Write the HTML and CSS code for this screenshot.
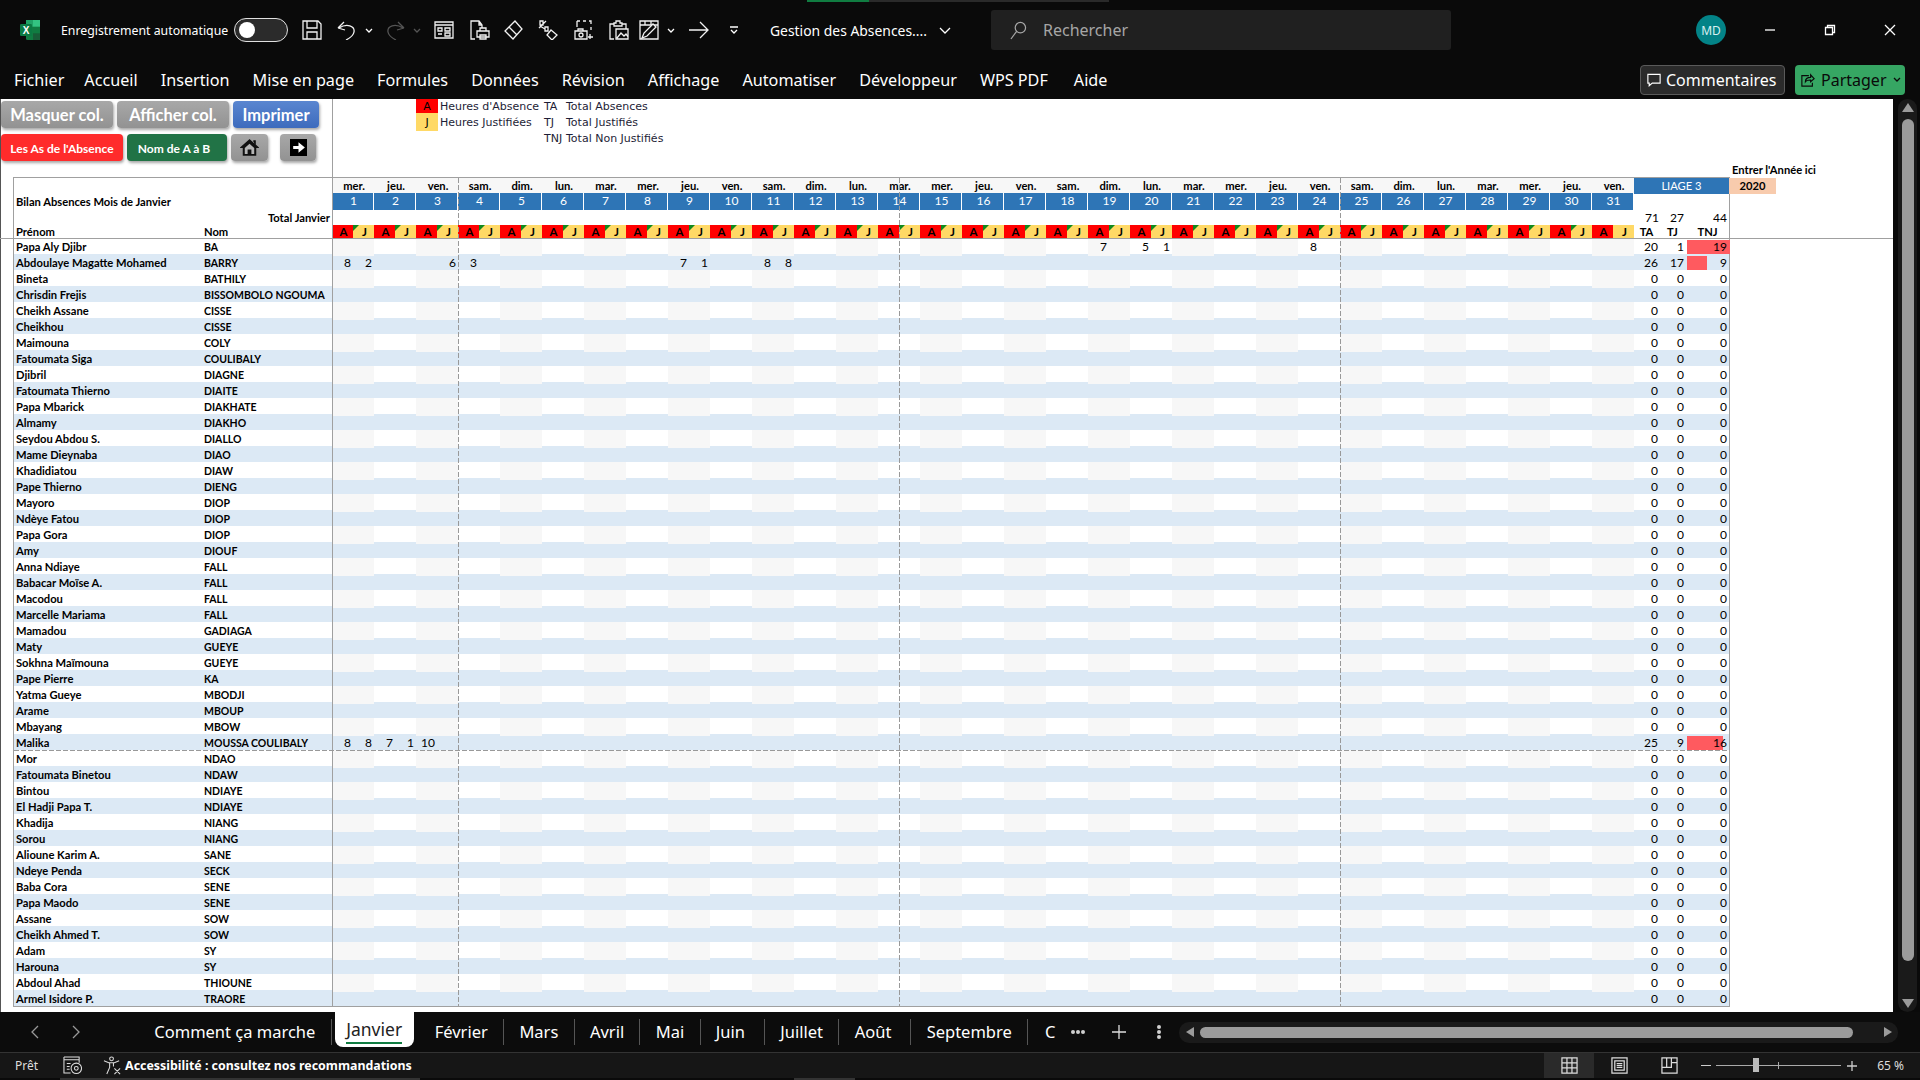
FILE: index.html
```html
<!DOCTYPE html>
<html lang="fr">

<head>
  <meta charset="UTF-8">
  <title>Gestion des Absences</title>
  <link rel="stylesheet" href="styles.css">
</head>

<body>
  <div class="edge-top"><span class="edge-green"></span><span class="edge-grey"></span></div>

  <header class="titlebar">
    <svg class="ico logo" viewBox="0 0 20 20">
      <rect x="6" y="0" width="14" height="20" rx="1.5" fill="#107c41"/>
      <rect x="13" y="0" width="7" height="6.7" fill="#33c481"/>
      <rect x="6" y="0" width="7" height="6.7" fill="#21a366"/>
      <rect x="13" y="13.3" width="7" height="6.7" fill="#185c37"/>
      <rect x="0" y="4" width="12" height="12" rx="1.2" fill="#0b7a43"/>
      <text x="6" y="13.5" text-anchor="middle" class="logo-x">X</text>
    </svg>
    <span class="autosave">Enregistrement automatique</span>
    <span class="toggle"><span class="toggle-dot"></span></span>

    <svg class="ico ico-save" viewBox="0 0 20 20"><path d="M1 1h15l3 3v15H1zM5 1v7h10V1M5 19v-7h10v7"/></svg>
    <svg class="ico ico-undo" viewBox="0 0 20 20"><path d="M1 8l6-6M1 8l7 2M2 8c8-5 16-2 15 4-.5 3-4 6-8 8"/></svg>
    <svg class="chev chev-undo" viewBox="0 0 8 5"><path d="M1 1l3 3 3-3"/></svg>
    <svg class="ico ico-redo" viewBox="0 0 20 20"><path d="M19 8l-6-6M19 8l-7 2M18 8c-8-5-16-2-15 4 .5 3 4 6 8 8"/></svg>
    <svg class="chev chev-redo" viewBox="0 0 8 5"><path d="M1 1l3 3 3-3"/></svg>
    <svg class="ico ico-form" viewBox="0 0 20 20"><path d="M1 2h18v16H1zM1 5h18M4 8h4v3H4zM11 8h5v3h-5zM4 14h4M11 13h5v3h-5z"/></svg>
    <svg class="ico ico-print" viewBox="0 0 20 20"><path d="M5 19H1V1h8l3 4v3M9 1v4h3M7 11h12v6H7zM10 11V8h6v3M10 15h6v4h-6z"/></svg>
    <svg class="ico ico-erase" viewBox="0 0 20 20"><path d="M12 1l7 8-9 10-8-8zM6 7l8 8"/></svg>
    <svg class="ico ico-pct" viewBox="0 0 20 20"><path d="M2 1h3v4H2zM7 9l-5-3M1 8l7-7M7 7h3v4H7zM13 10l6 5-5 5-5-5z"/></svg>
    <svg class="ico ico-cam" viewBox="0 0 20 20"><path d="M3 1h3M9 1h3M15 1h2v3M17 7v3M3 1v6M1 11h12v8H1zM4 11V9h5v2M16 14v5M14 17h5"/><circle cx="7" cy="15" r="2"/></svg>
    <svg class="ico ico-paste" viewBox="0 0 20 20"><path d="M5 19H1V4h4M13 4h4v5M5 5V3h2V1h4v2h2v3H5zM7 9h12v10H7zM8 18l4-5 3 3 2-2 2 3"/></svg>
    <svg class="ico ico-fmt" viewBox="0 0 20 20"><path d="M1 1h18v18H1zM1 5h18M6 1v4M12 1v4"/><path class="fill" d="M3 18l2-5 9-9 3 3-9 9z"/></svg>
    <svg class="chev chev-fmt" viewBox="0 0 8 5"><path d="M1 1l3 3 3-3"/></svg>
    <svg class="ico ico-arrow" viewBox="0 0 20 20"><path d="M0 10h19M11 2l8 8-8 8"/></svg>
    <svg class="chev qat" viewBox="0 0 10 9"><path d="M1 1h8M2 4l3 3 3-3"/></svg>

    <span class="doc-title">Gestion des Absences....</span>
    <svg class="chev chev-title" viewBox="0 0 12 7"><path d="M1 1l5 5 5-5"/></svg>

    <div class="search">
      <svg class="glass" viewBox="0 0 18 20"><circle cx="11" cy="7" r="5.5"/><path d="M7 11L1 19"/></svg>
      <span>Rechercher</span>
    </div>

    <span class="avatar">MD</span>
    <svg class="win win-min" viewBox="0 0 12 12"><path d="M1 6h10"/></svg>
    <svg class="win win-max" viewBox="0 0 12 12"><path d="M1.5 3.5h7v7h-7zM3.5 3.5v-2h7v7h-2"/></svg>
    <svg class="win win-close" viewBox="0 0 12 12"><path d="M1 1l10 10M11 1L1 11"/></svg>
  </header>

  <nav class="ribbon">
    <span class="rib-file">Fichier</span>
    <span>Accueil</span>
    <span>Insertion</span>
    <span>Mise en page</span>
    <span>Formules</span>
    <span>Données</span>
    <span>Révision</span>
    <span>Affichage</span>
    <span>Automatiser</span>
    <span>Développeur</span>
    <span class="rib-wps">WPS PDF</span>
    <span>Aide</span>
    <button class="btn-comments">
      <svg viewBox="0 0 16 16"><path d="M1 1.5h14v10H6l-3.500 3v-3H1z"/></svg>
      Commentaires
    </button>
    <button class="btn-share">
      <svg viewBox="0 0 16 16"><path d="M9 3H1v12h12v-4M5 10c0-4 3-5 6-5V2l4 4.500L11 10V8C8 8 6 8.500 5 10z"/></svg>
      Partager
      <svg class="share-chev" viewBox="0 0 8 5"><path d="M1 1l3 3 3-3"/></svg>
    </button>
  </nav>

  <main class="workspace">
    <section class="sheet">
      <div class="sheet-top">
        <div class="macros">
          <div class="macro-row">
            <button class="macro grey wide">Masquer col.</button>
            <button class="macro grey wide">Afficher col.</button>
            <button class="macro blue print">Imprimer</button>
          </div>
          <div class="macro-row">
            <button class="macro red small">Les As de l'Absence</button>
            <button class="macro green small name-sort">Nom de A à B</button>
            <button class="macro grey home">
              <svg viewBox="0 0 20 18"><path d="M10 1L1 9h2.500v8h13V9H19zM14 2h2v4"/><path class="home-door" d="M5 9.500L10 5l5 4.500V16h-3v-5H8v5H5z"/></svg>
            </button>
            <button class="macro grey next">
              <svg viewBox="0 0 16 16"><rect width="16" height="16"/><path class="next-arrow" d="M3 6.500h5V3l6 5-6 5V9.500H3z"/></svg>
            </button>
          </div>
        </div>

        <div class="legend">
          <span class="key key-a">A</span><span>Heures d'Absence</span><span>TA</span><span>Total Absences</span>
          <span class="key key-j">J</span><span>Heures Justifiées</span><span>TJ</span><span>Total Justifiés</span>
          <span></span><span></span><span>TNJ</span><span>Total Non Justifiés</span>
        </div>

        <div class="year-note">Entrer l'Année ici</div>
      </div>

      <div class="table" id="table">
        <div class="head" id="head"></div>
        <div id="rows"></div>
        <span class="vline vline-first"></span>
        <span class="page-break pb-1"></span>
        <span class="page-break pb-2"></span>
        <span class="page-break pb-3"></span>
        <span class="page-break-h"></span>
      </div>
      <span class="head-rule"></span>
    </section>

    <aside class="vscroll">
      <span class="arrow-up"></span>
      <span class="vthumb"></span>
      <span class="arrow-down"></span>
    </aside>
  </main>

  <footer class="tabbar">
    <svg class="tab-nav nav-prev" viewBox="0 0 8 14"><path d="M7 1L1 7l6 6"/></svg>
    <svg class="tab-nav nav-next" viewBox="0 0 8 14"><path d="M1 1l6 6-6 6"/></svg>
    <div class="tabs">
      <span class="tab">Comment ça marche</span>
      <span class="tab active">Janvier</span>
      <span class="tab">Février</span>
      <span class="tab">Mars</span>
      <span class="tab">Avril</span>
      <span class="tab">Mai</span>
      <span class="tab roomy">Juin</span>
      <span class="tab">Juillet</span>
      <span class="tab roomy">Août</span>
      <span class="tab">Septembre</span>
      <span class="tab last">C</span>
    </div>
    <span class="tab-more"><i></i><i></i><i></i></span>
    <svg class="tab-add" viewBox="0 0 14 14"><path d="M7 0v14M0 7h14"/></svg>
    <span class="tab-dots"><i></i><i></i><i></i></span>
    <div class="hscroll">
      <span class="arrow-left"></span>
      <span class="hthumb"></span>
      <span class="arrow-right"></span>
    </div>
  </footer>

  <div class="statusbar">
    <span class="ready">Prêt</span>
    <svg class="status-ico macro-ico" viewBox="0 0 20 20"><path d="M1 1h16v6M1 4h16M1 1v17h7M4 8h4M4 11h3M4 14h3"/><circle cx="14" cy="13" r="5.500"/><circle cx="14" cy="13" r="2"/></svg>
    <svg class="status-ico access-ico" viewBox="0 0 20 20"><circle cx="9" cy="3" r="2"/><path d="M1 5l5 2h6l5-2M7 7v5l-3 7M11 7v4M12 13l6 6M18 13l-6 6"/></svg>
    <span class="access-text">Accessibilité : consultez nos recommandations</span>
    <div class="status-right">
      <span class="view active">
        <svg viewBox="0 0 18 18"><path d="M1 1h16v16H1zM1 6.300h16M1 11.600h16M6.300 1v16M11.600 1v16"/></svg>
      </span>
      <span class="view">
        <svg viewBox="0 0 18 18"><path d="M1 1h16v16H1zM4 4h10v10H4zM6 7h6M6 9h6M6 11h6"/></svg>
      </span>
      <span class="view">
        <svg viewBox="0 0 18 18"><path d="M1 1h16v16H1zM1 11h10V1M6 1v10M11 6h6"/></svg>
      </span>
      <span class="zoom-minus"></span>
      <span class="slider"><span class="slider-tick"></span><span class="slider-thumb"></span></span>
      <svg class="zoom-plus" viewBox="0 0 10 10"><path d="M5 0v10M0 5h10"/></svg>
      <span class="zoom-val">65 %</span>
    </div>
  </div>
  <div class="edge-bottom"><span class="peek-1"></span><span class="peek-2"></span></div>

  <script src="script.js"></script>
</body>

</html>
```

FILE: styles.css
```css
* {
  box-sizing: border-box;
}

html,
body {
  margin: 0;
  height: 1080px;
  overflow: hidden;
  background: #0a0a0a;
  color: #fff;
  font-family: "Noto Sans", sans-serif;
}

svg {
  display: block;
  flex: none;
  fill: none;
  stroke: #fff;
  stroke-width: 1.3;
}

button {
  font-family: inherit;
  border: none;
  padding: 0;
}

/* window top */
.edge-top {
  position: absolute;
  top: 0;
  left: 807px;
  display: flex;
  height: 2px;
}

.edge-green {
  width: 62px;
  background: #107c41;
}

.edge-grey {
  width: 240px;
  background: #2a2a2a;
}

.titlebar {
  display: flex;
  align-items: center;
  height: 60px;
}

.ico {
  width: 20px;
  height: 20px;
  stroke: #f2f2f2;
}

.logo {
  margin-left: 20px;
  stroke: none;
}

.logo-x {
  fill: #fff;
  stroke: none;
  font: bold 10px "Liberation Sans", sans-serif;
}

.autosave {
  margin-left: 21px;
  width: 173px;
  font-size: 12.300px;
  white-space: nowrap;
}

.toggle {
  display: flex;
  align-items: center;
  width: 54px;
  height: 24px;
  padding-left: 4px;
  background: #2b2b2b;
  border: 1px solid #e0e0e0;
  border-radius: 12px;
}

.toggle-dot {
  width: 16px;
  height: 16px;
  border-radius: 50%;
  background: #fff;
}

.ico-save { margin-left: 14px; }
.ico-undo { margin-left: 15px; }
.chev { width: 8px; height: 5px; }
.chev-undo { margin-left: 8px; }
.ico-redo { margin-left: 12px; stroke: #555; }
.chev-redo { margin-left: 8px; stroke: #555; }
.ico-form { margin-left: 13px; }
.ico-print { margin-left: 16px; }
.ico-erase { margin-left: 13px; }
.ico-pct { margin-left: 15px; }
.ico-cam { margin-left: 16px; }
.ico-paste { margin-left: 15px; }
.ico-fmt { margin-left: 10px; }
.ico-fmt .fill { fill: #0a0a0a; }
.chev-fmt { margin-left: 8px; }
.ico-arrow { margin-left: 14px; }
.qat { margin-left: 20px; width: 10px; height: 9px; }

.doc-title {
  margin-left: 31px;
  width: 169px;
  font-size: 13.900px;
  white-space: nowrap;
}

.chev-title {
  width: 12px;
  height: 7px;
}

.search {
  display: flex;
  align-items: center;
  margin-left: 40px;
  width: 460px;
  height: 40px;
  padding-left: 19px;
  background: #202020;
  border-radius: 3px;
  color: #a6a6a6;
  font-size: 16px;
}

.glass {
  width: 17px;
  height: 19px;
  margin-right: 16px;
  stroke: #a6a6a6;
}

.avatar {
  display: flex;
  align-items: center;
  justify-content: center;
  margin-left: 245px;
  width: 30px;
  height: 30px;
  border-radius: 50%;
  background: #038387;
  color: #d8f0f0;
  font-size: 12px;
}

.win {
  width: 12px;
  height: 12px;
}

.win-min { margin-left: 38px; }
.win-max { margin-left: 48px; }
.win-close { margin-left: 48px; }

/* ribbon tabs */
.ribbon {
  display: flex;
  align-items: center;
  gap: 23px;
  height: 39px;
  padding-left: 14px;
  font-size: 16.200px;
}

.rib-file { margin-right: -3px; }
.rib-wps { margin-right: 3px; }

.btn-comments,
.btn-share {
  display: flex;
  align-items: center;
  height: 30px;
  border-radius: 4px;
  font-size: 16px;
}

.btn-comments {
  margin-left: auto;
  margin-right: -13px;
  width: 145px;
  padding-left: 6px;
  gap: 5px;
  color: #fff;
  background: #2b2b2b;
  border: 1px solid #5a5a5a;
}

.btn-comments svg {
  width: 14px;
  height: 14px;
}

.btn-share {
  margin-right: 15px;
  width: 110px;
  padding-left: 6px;
  gap: 6px;
  color: #0a0a0a;
  background: #36a663;
}

.btn-share svg {
  width: 14px;
  height: 14px;
  stroke: #0a0a0a;
}

.btn-share .share-chev {
  width: 8px;
  height: 5px;
}

/* sheet */
.workspace {
  display: flex;
  height: 913px;
}

.sheet {
  position: relative;
  width: 1893px;
  background: #fff;
  color: #000;
  border-left: 1px solid #555;
  font-family: Lato, sans-serif;
  font-size: 11.200px;
  font-weight: bold;
}

.sheet-top {
  display: flex;
  height: 78px;
  margin-left: -1px;
}

.macros {
  display: flex;
  flex-direction: column;
  gap: 6px;
  width: 333px;
  padding: 2px 0 0 1px;
  border-right: 1px solid #a0a0a0;
}

.macro-row {
  display: flex;
  gap: 4px;
}

.macro {
  display: flex;
  align-items: center;
  justify-content: center;
  height: 27px;
  border-radius: 4px;
  color: #fff;
  font-family: Lato, sans-serif;
  font-weight: bold;
  font-size: 16.500px;
  box-shadow: 1px 2px 3px rgba(0, 0, 0, 0.35);
}

.grey { background: linear-gradient(#a8a8a8, #929292); }
.blue { background: linear-gradient(#5a86d0, #3d6bbd); }
.red { background: #ff2b2b; }
.green { background: #217346; }

.wide { width: 112px; }
.print { width: 86px; }
.small { font-size: 12px; padding-top: 1px; }
.macro-row .red { width: 122px; }
.name-sort { width: 100px; padding-right: 6px; }
.home { width: 37px; }
.next { width: 36px; margin-left: 8px; }

.home svg {
  width: 19px;
  height: 17px;
  fill: #111;
  stroke: #111;
}

.home .home-door {
  fill: #b5b5b5;
  stroke: none;
}

.next svg {
  width: 17px;
  height: 17px;
  fill: #000;
  stroke: none;
}

.next .next-arrow {
  fill: #fff;
}

.legend {
  display: grid;
  grid-template-columns: 22px 106px 22px auto;
  grid-template-rows: 14px 18px 15px;
  align-items: center;
  margin-left: 83px;
  height: 47px;
  color: #1d1d36;
  font-family: "DejaVu Sans", sans-serif;
  font-size: 11px;
  font-weight: normal;
  white-space: nowrap;
}

.legend > span:nth-child(4n+2) {
  padding-left: 2px;
}

.key {
  display: flex;
  align-items: center;
  justify-content: center;
  height: 100%;
  color: #000;
}

.key-a { background: #f00; }
.key-j { background: #ffd966; }

.year-note {
  align-self: flex-end;
  margin-left: auto;
  width: 161px;
  line-height: 16px;
  margin-bottom: -1px;
}

.table {
  position: relative;
  margin-left: 12px;
  width: 1717px;
  height: 830px;
  border: 1px solid #a0a0a0;
}

.head,
.row {
  display: grid;
  grid-template-columns: 190px 128px repeat(62, 21px) 25px 27px 43px 47px;
}

.head {
  grid-template-rows: 15px 17px 15px 13px;
  line-height: 15px;
}

.head-title {
  grid-column: 1 / 3;
  grid-row: 1 / 4;
  align-self: center;
  padding-left: 2px;
}

.head-total {
  grid-column: 1 / 3;
  grid-row: 3;
  padding-right: 2px;
  text-align: right;
}

.head-first,
.head-last {
  grid-row: 4;
  padding-left: 2px;
  line-height: 13px;
}

.head-first { grid-column: 1; }
.head-last { grid-column: 2; padding-left: 0; }

.day-name {
  grid-column-end: span 2;
  grid-row: 1;
  padding-left: 2px;
  background: #f7f7f7;
  text-align: center;
}

.day-num {
  grid-column-end: span 2;
  grid-row: 2;
  padding-left: 2px;
  background: #2e75b6;
  border-right: 1px solid #fff;
  color: #fff;
  font-weight: normal;
  font-size: 12px;
  line-height: 15px;
  text-align: center;
}

.mark {
  grid-row: 4;
  position: relative;
  padding-left: 2px;
  font-size: 11.500px;
  line-height: 13px;
  text-align: center;
}

.mark-a { background: #f00; }
.mark-j { background: #ffd966; }

.mark.flag::before {
  content: "";
  position: absolute;
  top: 0;
  left: 0;
  border-top: 6px solid #11891f;
  border-right: 6px solid transparent;
}

.liage {
  grid-column: 65 / 68;
  grid-row: 1 / 3;
  height: 16px;
  background: #2e75b6;
  color: #fff;
  font-weight: normal;
  line-height: 16px;
  text-align: center;
}

.year {
  grid-column: 68;
  grid-row: 1 / 3;
  height: 16px;
  background: #f8cbad;
  line-height: 16px;
  text-align: center;
}

.grand {
  grid-row: 3;
  padding-right: 2px;
  font-weight: normal;
  font-size: 12px;
  text-align: right;
}

.grand-ta {
  padding-right: 0;
}

.cap {
  grid-row: 4;
  line-height: 13px;
  text-align: center;
}

.row {
  height: 16px;
  line-height: 18px;
}

.row:nth-child(even) {
  background: #dce9f5;
}

.first {
  padding-left: 2px;
  white-space: nowrap;
}

.last-name {
  font-size: 10.500px;
  white-space: nowrap;
}

.days {
  grid-column: 3 / 65;
  display: grid;
  grid-template-columns: repeat(62, 21px);
  font-weight: normal;
  font-size: 12px;
}

.row:nth-child(odd) .days {
  background: repeating-linear-gradient(90deg, #f7f7f7 0 42px, transparent 42px 84px);
}

.val {
  padding-right: 2px;
  text-align: right;
}

.num {
  position: relative;
  padding-right: 2px;
  font-weight: normal;
  font-size: 12px;
  text-align: right;
}

.num-ta {
  padding-right: 1px;
}

.bar {
  position: absolute;
  top: 2px;
  bottom: 2px;
  left: 1px;
  background: #ff5a5f;
}

.num-val {
  position: relative;
}

.vline {
  position: absolute;
  top: 0;
  bottom: 0;
  left: 318px;
  width: 1px;
  background: #a0a0a0;
}

.page-break {
  position: absolute;
  top: 0;
  bottom: 0;
  width: 1px;
  background: repeating-linear-gradient(180deg, #999 0 5px, transparent 5px 7px);
}

.pb-1 { left: 444px; }
.pb-2 { left: 885px; }
.pb-3 { left: 1326px; }

.page-break-h {
  position: absolute;
  top: 572px;
  left: 0;
  right: 0;
  height: 1px;
  background: repeating-linear-gradient(90deg, #999 0 5px, transparent 5px 7px);
}

.head-rule {
  position: absolute;
  top: 139px;
  left: -1px;
  right: 0;
  height: 1px;
  background: #a0a0a0;
}

/* scrollbars */
.vscroll {
  position: relative;
  width: 27px;
}

.vscroll::before {
  content: "";
  position: absolute;
  top: 0;
  bottom: 0;
  left: 5px;
  width: 19px;
  background: #1a1a1a;
  border-radius: 10px;
}

.vthumb {
  position: absolute;
  top: 20px;
  left: 9px;
  width: 12px;
  height: 842px;
  background: #9b9b9b;
  border-radius: 6px;
}

.arrow-up,
.arrow-down {
  position: absolute;
  left: 9px;
  border-left: 6px solid transparent;
  border-right: 6px solid transparent;
}

.arrow-up {
  top: 4px;
  border-bottom: 9px solid #9b9b9b;
}

.arrow-down {
  bottom: 4px;
  border-top: 9px solid #9b9b9b;
}

/* sheet tabs */
.tabbar {
  position: relative;
  display: flex;
  align-items: center;
  height: 41px;
  border-bottom: 1px solid #333;
  background: #0c0c0c;
}

.tab-nav {
  width: 8px;
  height: 14px;
  stroke: #999;
}

.nav-prev { margin-left: 31px; }
.nav-next { margin-left: 33px; }

.tabs {
  display: flex;
  align-items: center;
  margin-left: 59px;
  font-size: 16.500px;
}

.tab {
  padding: 0 15.300px;
  line-height: 26px;
  border-right: 1px solid #555;
  white-space: nowrap;
}

.tab.roomy {
  padding-right: 19px;
}

.tab.active {
  position: relative;
  margin: -6px 5.700px 0 3px;
  padding: 4px 0 5px;
  width: 79px;
  height: 35px;
  background: #fff;
  color: #222;
  border: none;
  border-radius: 0 0 8px 8px;
  font-size: 17.500px;
  text-align: center;
}

.tab.active::after {
  content: "";
  position: absolute;
  left: 11px;
  right: 12px;
  bottom: 3px;
  height: 2px;
  background: #107c41;
}

.tab.last {
  border: none;
  padding-left: 17px;
  padding-right: 15px;
}

.tab-more,
.tab-dots {
  display: flex;
  gap: 1px;
}

.tab-more i,
.tab-dots i {
  width: 4px;
  height: 4px;
  border-radius: 50%;
  background: #d0d0d0;
}

.tab-add {
  margin-left: 27px;
  width: 14px;
  height: 14px;
  stroke: #ddd;
}

.tab-dots {
  flex-direction: column;
  margin-left: 31px;
}

.hscroll {
  position: relative;
  margin-left: 18px;
  width: 719px;
  height: 21px;
  border-radius: 10px;
  background: #1a1a1a;
}

.hthumb {
  position: absolute;
  top: 5px;
  left: 21px;
  width: 653px;
  height: 11px;
  border-radius: 6px;
  background: #9b9b9b;
}

.arrow-left,
.arrow-right {
  position: absolute;
  top: 5px;
  border-top: 5.500px solid transparent;
  border-bottom: 5.500px solid transparent;
}

.arrow-left {
  left: 7px;
  border-right: 8px solid #9b9b9b;
}

.arrow-right {
  right: 6px;
  border-left: 8px solid #9b9b9b;
}

/* status bar */
.statusbar {
  display: flex;
  align-items: center;
  height: 25px;
  background: #161616;
  font-size: 12px;
}

.ready {
  margin-left: 15px;
  color: #ddd;
}

.status-ico {
  width: 19px;
  height: 19px;
  stroke: #ddd;
  stroke-width: 1.1;
}

.macro-ico { margin-left: 25px; }
.access-ico { margin-left: 21px; }

.access-text {
  margin-left: 3px;
  font-size: 12.400px;
  font-weight: bold;
  white-space: nowrap;
}

.status-right {
  display: flex;
  align-items: center;
  margin-left: auto;
  height: 100%;
}

.view {
  display: flex;
  align-items: center;
  justify-content: center;
  width: 50px;
  height: 100%;
}

.view.active {
  background: #2a2a2a;
}

.view svg {
  width: 17px;
  height: 17px;
  stroke: #ddd;
}

.zoom-minus {
  margin-left: 7px;
  width: 10px;
  height: 1.500px;
  background: #ccc;
}

.slider {
  position: relative;
  margin-left: 5px;
  width: 125px;
  height: 1px;
  background: #aaa;
}

.slider-tick {
  position: absolute;
  top: -3px;
  left: 62px;
  width: 1px;
  height: 7px;
  background: #aaa;
}

.slider-thumb {
  position: absolute;
  top: -7px;
  left: 37px;
  width: 6px;
  height: 14px;
  background: #bbb;
}

.zoom-plus {
  margin-left: 6px;
  width: 10px;
  height: 10px;
  stroke: #ccc;
}

.zoom-val {
  margin-left: 20px;
  margin-right: 16px;
  color: #ddd;
  white-space: nowrap;
}

.edge-bottom {
  position: relative;
  height: 2px;
}

.peek-1,
.peek-2 {
  position: absolute;
  top: 0;
  height: 2px;
  background: #333;
}

.peek-1 { left: 60px; width: 360px; }
.peek-2 { left: 794px; width: 61px; }
```

FILE: script.js
```js
const people = [
  ["Papa Aly Djibr", "BA"], ["Abdoulaye Magatte Mohamed", "BARRY"], ["Bineta", "BATHILY"],
  ["Chrisdin Frejis", "BISSOMBOLO NGOUMA"], ["Cheikh Assane", "CISSE"], ["Cheikhou", "CISSE"],
  ["Maimouna", "COLY"], ["Fatoumata Siga", "COULIBALY"], ["Djibril", "DIAGNE"],
  ["Fatoumata Thierno", "DIAITE"], ["Papa Mbarick", "DIAKHATE"], ["Almamy", "DIAKHO"],
  ["Seydou Abdou S.", "DIALLO"], ["Mame Dieynaba", "DIAO"], ["Khadidiatou", "DIAW"],
  ["Pape Thierno", "DIENG"], ["Mayoro", "DIOP"], ["Ndèye Fatou", "DIOP"],
  ["Papa Gora", "DIOP"], ["Amy", "DIOUF"], ["Anna Ndiaye", "FALL"],
  ["Babacar Moïse A.", "FALL"], ["Macodou", "FALL"], ["Marcelle Mariama", "FALL"],
  ["Mamadou", "GADIAGA"], ["Maty", "GUEYE"], ["Sokhna Maïmouna", "GUEYE"],
  ["Pape Pierre", "KA"], ["Yatma Gueye", "MBODJI"], ["Arame", "MBOUP"],
  ["Mbayang", "MBOW"], ["Malika", "MOUSSA COULIBALY"], ["Mor", "NDAO"],
  ["Fatoumata Binetou", "NDAW"], ["Bintou", "NDIAYE"], ["El Hadji Papa T.", "NDIAYE"],
  ["Khadija", "NIANG"], ["Sorou", "NIANG"], ["Alioune Karim A.", "SANE"],
  ["Ndeye Penda", "SECK"], ["Baba Cora", "SENE"], ["Papa Maodo", "SENE"],
  ["Assane", "SOW"], ["Cheikh Ahmed T.", "SOW"], ["Adam", "SY"],
  ["Harouna", "SY"], ["Abdoul Ahad", "THIOUNE"], ["Armel Isidore P.", "TRAORE"]
];

// absences by row index: column (0-61) -> hours
const hours = {
  0: { 36: 7, 38: 5, 39: 1, 46: 8 },
  1: { 0: 8, 1: 2, 5: 6, 6: 3, 16: 7, 17: 1, 20: 8, 21: 8 },
  31: { 0: 8, 1: 8, 2: 7, 3: 1, 4: 10 }
};
const totals = { 0: [20, 1, 19], 1: [26, 17, 9], 31: [25, 9, 16] };
const weekdays = ["mer.", "jeu.", "ven.", "sam.", "dim.", "lun.", "mar."];
const maxTnj = 19;

let headHtml = `
  <div class="head-title">Bilan Absences Mois de Janvier</div>
  <div class="head-total">Total Janvier</div>
  <div class="head-first">Prénom</div>
  <div class="head-last">Nom</div>`;

for (let d = 0; d < 31; d++) {
  const col = 3 + d * 2;
  const flag = d < 30 ? " flag" : "";
  headHtml += `
    <div class="day-name" style="grid-column-start:${col}">${weekdays[d % 7]}</div>
    <div class="day-num" style="grid-column-start:${col}">${d + 1}</div>
    <div class="mark mark-a" style="grid-column:${col}">A</div>
    <div class="mark mark-j${flag}" style="grid-column:${col + 1}">J</div>`;
}

headHtml += `
  <div class="liage">LIAGE 3</div>
  <div class="year">2020</div>
  <div class="grand grand-ta" style="grid-column:65">71</div>
  <div class="grand" style="grid-column:66">27</div>
  <div class="grand" style="grid-column:67">44</div>
  <div class="cap" style="grid-column:65">TA</div>
  <div class="cap" style="grid-column:66">TJ</div>
  <div class="cap" style="grid-column:67">TNJ</div>`;

document.getElementById("head").innerHTML = headHtml;

let rowsHtml = "";
people.forEach((person, i) => {
  const vals = hours[i] || {};
  const t = totals[i] || [0, 0, 0];
  let days = "";
  Object.keys(vals).forEach((c) => {
    days += `<span class="val" style="grid-column:${Number(c) + 1}">${vals[c]}</span>`;
  });
  const barWidth = Math.round((t[2] / maxTnj) * 100);
  rowsHtml += `
    <div class="row">
      <span class="first">${person[0]}</span>
      <span class="last-name">${person[1]}</span>
      <div class="days">${days}</div>
      <span class="num num-ta">${t[0]}</span>
      <span class="num">${t[1]}</span>
      <span class="num"><span class="bar" style="width:${barWidth}%"></span><span class="num-val">${t[2]}</span></span>
    </div>`;
});

document.getElementById("rows").innerHTML = rowsHtml;
```
